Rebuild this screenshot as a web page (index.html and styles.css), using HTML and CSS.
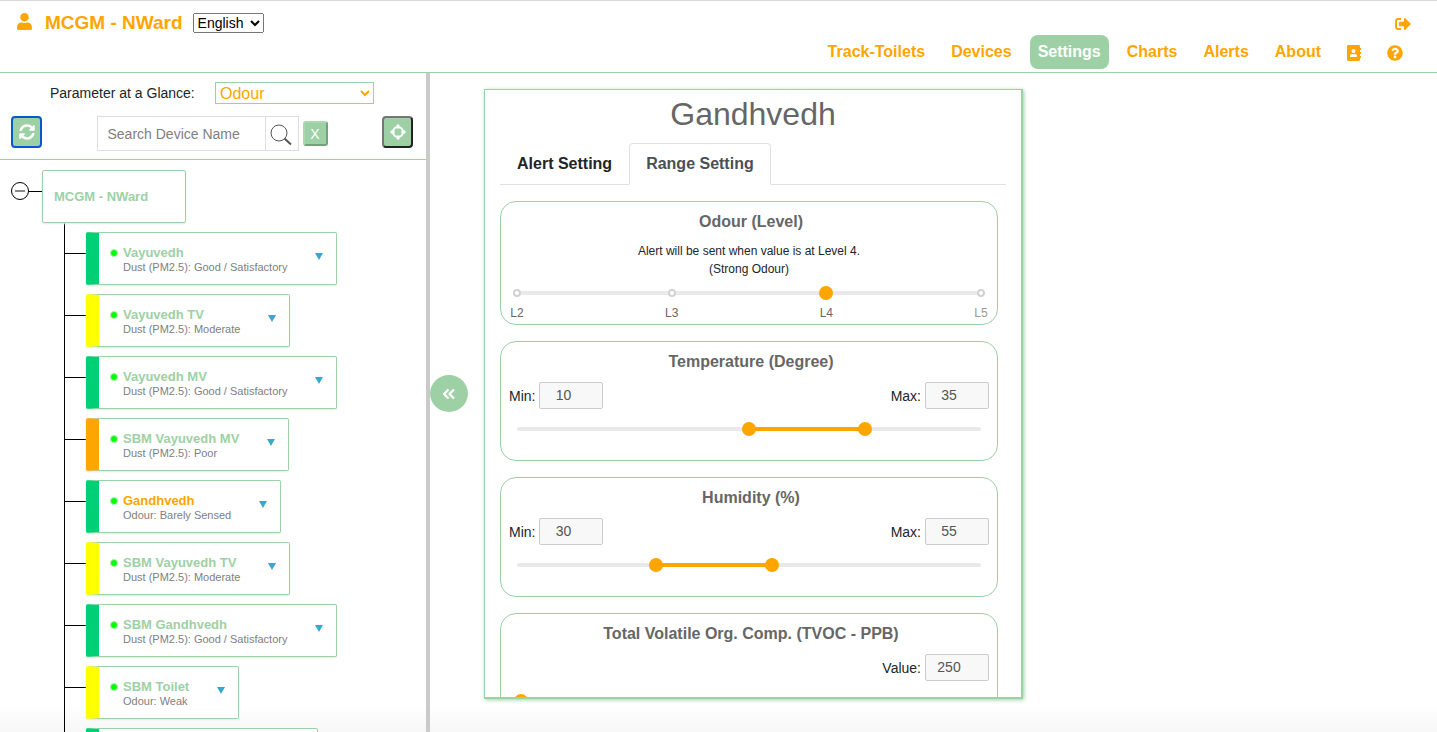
FILE: index.html
```html
<!DOCTYPE html>
<html lang="en">
<head>
<meta charset="utf-8">
<title>MCGM - NWard Settings</title>
<link rel="stylesheet" href="styles.css">
</head>
<body>
<header class="topbar">
  <div class="brand">
    <svg class="icon-user" viewBox="0 0 448 512" aria-hidden="true"><path d="M224 256c70.7 0 128-57.3 128-128S294.7 0 224 0 96 57.3 96 128s57.3 128 128 128zm89.6 32h-16.7c-22.2 10.2-46.9 16-72.9 16s-50.6-5.8-72.9-16h-16.7C60.2 288 0 348.2 0 422.4V464c0 26.5 21.5 48 48 48h352c26.5 0 48-21.5 48-48v-41.6c0-74.2-60.2-134.4-134.4-134.4z"/></svg>
    <h1 class="brand-name">MCGM - NWard</h1>
    <select class="language" aria-label="Language"><option>English</option></select>
  </div>
  <div class="menu">
    <a class="logout" href="#logout" aria-label="Log out"><svg viewBox="0 0 512 512"><path d="M497 273L329 441c-15 15-41 4.500-41-17v-96H152c-13.300 0-24-10.700-24-24v-96c0-13.300 10.700-24 24-24h136V88c0-21.400 25.900-32 41-17l168 168c9.300 9.400 9.300 24.600 0 34zM192 436v-40c0-6.600-5.400-12-12-12H96c-17.700 0-32-14.300-32-32V160c0-17.700 14.300-32 32-32h84c6.600 0 12-5.400 12-12V76c0-6.600-5.400-12-12-12H96c-53 0-96 43-96 96v192c0 53 43 96 96 96h84c6.600 0 12-5.400 12-12z"/></svg></a>
    <nav class="nav">
      <a href="#track">Track-Toilets</a>
      <a href="#devices">Devices</a>
      <a class="current" href="#settings" aria-current="page">Settings</a>
      <a href="#charts">Charts</a>
      <a href="#alerts">Alerts</a>
      <a href="#about">About</a>
      <a class="nav-icon" href="#contacts" aria-label="Contacts"><svg class="icon-book" viewBox="0 0 448 512"><path d="M436 160c6.600 0 12-5.400 12-12v-40c0-6.600-5.400-12-12-12h-20V48c0-26.500-21.500-48-48-48H48C21.500 0 0 21.500 0 48v416c0 26.500 21.500 48 48 48h320c26.500 0 48-21.500 48-48v-48h20c6.600 0 12-5.400 12-12v-40c0-6.600-5.400-12-12-12h-20v-64h20c6.600 0 12-5.400 12-12v-40c0-6.600-5.400-12-12-12h-20v-64h20zm-228-32c35.300 0 64 28.700 64 64s-28.700 64-64 64-64-28.700-64-64 28.700-64 64-64zm112 236.800c0 10.600-10 19.200-22.400 19.200H118.400C106 384 96 375.400 96 364.800v-19.200c0-31.800 30.100-57.600 67.200-57.600h5c12.300 5.100 25.700 8 39.800 8s27.600-2.900 39.800-8h5c37.100 0 67.200 25.800 67.200 57.600v19.200z"/></svg></a>
      <a class="nav-icon" href="#help" aria-label="Help"><svg class="icon-help" viewBox="0 0 512 512"><path d="M504 256c0 136.997-111.043 248-248 248S8 392.997 8 256C8 119.083 119.043 8 256 8s248 111.083 248 248zM262.655 90c-54.497 0-89.255 22.957-116.549 63.758-3.536 5.286-2.353 12.415 2.715 16.258l34.699 26.310c5.205 3.947 12.621 3.008 16.665-2.122 17.864-22.658 30.113-35.797 57.303-35.797 20.429 0 45.698 13.148 45.698 32.958 0 14.976-12.363 22.667-32.534 33.976C247.128 238.528 216 254.941 216 296v4c0 6.627 5.373 12 12 12h56c6.627 0 12-5.373 12-12v-1.333c0-28.462 83.186-29.647 83.186-106.667 0-58.002-60.165-102-116.531-102zM256 338c-25.365 0-46 20.635-46 46 0 25.364 20.635 46 46 46s46-20.636 46-46c0-25.365-20.635-46-46-46z"/></svg></a>
    </nav>
  </div>
</header>

<div class="workspace">
  <aside class="sidebar">
    <div class="filters">
      <div class="glance">
        <label for="parameter">Parameter at a Glance:</label>
        <select id="parameter" class="parameter"><option>Odour</option></select>
      </div>
      <div class="tools">
        <button class="tool refresh" type="button" aria-label="Refresh"><svg viewBox="0 0 512 512"><path d="M370.720 133.280C339.458 104.008 298.888 87.962 255.848 88c-77.458.068-144.328 53.178-162.791 126.850-1.344 5.363-6.122 9.150-11.651 9.150H24.103c-7.498 0-13.194-6.807-11.807-14.176C33.933 94.924 134.813 8 256 8c66.448 0 126.791 26.136 171.315 68.685L463.030 40.970C478.149 25.851 504 36.559 504 57.941V192c0 13.255-10.745 24-24 24H345.941c-21.382 0-32.090-25.851-16.971-40.971l41.750-41.749zM32 296h134.059c21.382 0 32.090 25.851 16.971 40.971l-41.750 41.750c31.262 29.273 71.835 45.319 114.876 45.280 77.418-.07 144.315-53.144 162.787-126.849 1.344-5.363 6.122-9.150 11.651-9.150h57.304c7.498 0 13.194 6.807 11.807 14.176C478.067 417.076 377.187 504 256 504c-66.448 0-126.791-26.136-171.315-68.685L48.970 471.030C33.851 486.149 8 475.441 8 454.059V320c0-13.255 10.745-24 24-24z"/></svg></button>
        <form class="search">
          <input class="search-text" type="text" placeholder="Search Device Name" aria-label="Search Device Name">
          <button class="search-go" type="button" aria-label="Search"><svg viewBox="0 0 24 24"><circle cx="10" cy="10" r="8"/><path d="M15.500 15.500L22 21.500" stroke-width="2"/></svg></button>
          <button class="search-clear" type="button">X</button>
        </form>
        <button class="tool locate" type="button" aria-label="Locate"><svg viewBox="0 0 16 16"><circle cx="8" cy="8" r="5" fill="none" stroke="#fff" stroke-width="2"/><path d="M6.500 1Q8-.4 9.500 1V4.600H6.500zM6.500 15Q8 16.400 9.500 15V11.400H6.500zM1 6.500Q-.4 8 1 9.500H4.600V6.500zM15 6.500Q16.400 8 15 9.500H11.400V6.500z"/></svg></button>
      </div>
    </div>

    <div class="tree">
      <div class="root">
        <button class="collapse" type="button" aria-label="Collapse MCGM - NWard"></button>
        <a class="root-name" href="#nward">MCGM - NWard</a>
      </div>
      <ul class="devices">
        <li><a class="device good" href="#d1"><span class="status"></span><span class="info"><b>Vayuvedh</b><small>Dust (PM2.5): Good / Satisfactory</small></span><span class="caret"></span></a></li>
        <li><a class="device moderate" href="#d2"><span class="status"></span><span class="info"><b>Vayuvedh TV</b><small>Dust (PM2.5): Moderate</small></span><span class="caret"></span></a></li>
        <li><a class="device good" href="#d3"><span class="status"></span><span class="info"><b>Vayuvedh MV</b><small>Dust (PM2.5): Good / Satisfactory</small></span><span class="caret"></span></a></li>
        <li><a class="device poor" href="#d4"><span class="status"></span><span class="info"><b>SBM Vayuvedh MV</b><small>Dust (PM2.5): Poor</small></span><span class="caret"></span></a></li>
        <li><a class="device good selected" href="#d5"><span class="status"></span><span class="info"><b>Gandhvedh</b><small>Odour: Barely Sensed</small></span><span class="caret"></span></a></li>
        <li><a class="device moderate" href="#d6"><span class="status"></span><span class="info"><b>SBM Vayuvedh TV</b><small>Dust (PM2.5): Moderate</small></span><span class="caret"></span></a></li>
        <li><a class="device good" href="#d7"><span class="status"></span><span class="info"><b>SBM Gandhvedh</b><small>Dust (PM2.5): Good / Satisfactory</small></span><span class="caret"></span></a></li>
        <li><a class="device moderate" href="#d8"><span class="status"></span><span class="info"><b>SBM Toilet</b><small>Odour: Weak</small></span><span class="caret"></span></a></li>
        <li><a class="device good unnamed" href="#d9" aria-label="Next device"></a></li>
      </ul>
    </div>
  </aside>

  <main class="content">
    <button class="hide-panel" type="button" aria-label="Hide device list"><svg viewBox="0 0 14 12"><path d="M6.500 1.500L2 6l4.500 4.500M12 1.500L7.500 6l4.500 4.500"/></svg></button>
    <section class="card">
      <h2 class="card-title">Gandhvedh</h2>
      <div class="tabs" role="tablist">
        <button class="tab" type="button" role="tab" aria-selected="false">Alert Setting</button>
        <button class="tab active" type="button" role="tab" aria-selected="true">Range Setting</button>
      </div>

      <section class="group">
        <h3>Odour (Level)</h3>
        <p class="note">Alert will be sent when value is at Level 4.<br>(Strong Odour)</p>
        <div class="slider">
          <div class="rail steps"><i></i><i></i><i></i><i></i></div>
          <input type="range" min="2" max="5" value="4" aria-label="Odour level">
        </div>
        <div class="marks"><span>L2</span><span>L3</span><span>L4</span><span class="off">L5</span></div>
      </section>

      <section class="group">
        <h3>Temperature (Degree)</h3>
        <div class="fields">
          <label>Min: <input type="number" value="10"></label>
          <label>Max: <input type="number" value="35"></label>
        </div>
        <div class="slider">
          <div class="rail"><div class="fill" style="margin-left:50%;width:25%"></div></div>
          <input type="range" min="-40" max="60" value="10" aria-label="Minimum temperature">
          <input type="range" min="-40" max="60" value="35" aria-label="Maximum temperature">
        </div>
      </section>

      <section class="group">
        <h3>Humidity (%)</h3>
        <div class="fields">
          <label>Min: <input type="number" value="30"></label>
          <label>Max: <input type="number" value="55"></label>
        </div>
        <div class="slider">
          <div class="rail"><div class="fill" style="margin-left:30%;width:25%"></div></div>
          <input type="range" min="0" max="100" value="30" aria-label="Minimum humidity">
          <input type="range" min="0" max="100" value="55" aria-label="Maximum humidity">
        </div>
      </section>

      <section class="group">
        <h3>Total Volatile Org. Comp. (TVOC - PPB)</h3>
        <div class="fields single">
          <label>Value: <input type="number" value="250"></label>
        </div>
        <div class="slider">
          <div class="rail"></div>
          <input type="range" min="0" max="30000" value="250" aria-label="TVOC value">
        </div>
      </section>
    </section>
  </main>
</div>
</body>
</html>
```

FILE: styles.css
```css
:root {
  --orange: #ffa500;
  --green: #9dd1a5;
  --gray: #666;
}

* { box-sizing: border-box; }

body {
  margin: 0;
  height: 100vh;
  display: flex;
  flex-direction: column;
  overflow: hidden;
  font-family: "Liberation Sans", Arial, sans-serif;
  font-size: 14px;
  color: #212529;
  background: linear-gradient(to top, #f7f7f7, #fff 28px);
}

button, input { font-family: inherit; margin: 0; }
a { text-decoration: none; }
svg { display: block; }

/* Header */
.topbar {
  flex: none;
  height: 73px;
  display: flex;
  justify-content: space-between;
  border-top: 1px solid #dadada;
  border-bottom: 1px solid var(--green);
  padding: 0 26px 0 17px;
}
.brand {
  display: flex;
  align-items: center;
  height: 44px;
}
.icon-user { width: 15px; height: 17px; margin: 0 13px 4px 0; fill: var(--orange); }
.brand-name { margin: 0 10px 0 0; font-size: 19px; color: var(--orange); }
.language { width: 71px; height: 20px; padding: 0; font: 14px "Liberation Sans", Arial, sans-serif; }

.menu {
  display: flex;
  flex-direction: column;
  align-items: flex-end;
  padding-top: 15px;
}
.logout svg { width: 16px; height: 16px; fill: var(--orange); }
.nav {
  display: flex;
  gap: 10px;
  margin-top: 3px;
}
.nav a {
  display: flex;
  align-items: center;
  height: 34px;
  padding: 0 8px;
  border-radius: 8px;
  font-size: 16px;
  font-weight: bold;
  color: var(--orange);
}
.nav a.current { background: var(--green); color: #fff; }
.nav-icon svg { fill: var(--orange); height: 16px; margin-top: 2px; }
.icon-book { width: 14px; }
.icon-help { width: 16px; }

/* Sidebar */
.workspace { flex: 1; display: flex; min-height: 0; }
.sidebar {
  flex: none;
  width: 430px;
  border-right: 4px solid #cacaca;
  overflow: hidden;
}
.filters { border-bottom: 1px solid var(--green); padding: 9px 13px 8px 11px; }
.glance { display: flex; align-items: center; gap: 16px; padding-left: 39px; }
.glance label { width: 149px; white-space: nowrap; }
.parameter {
  width: 159px;
  height: 22px;
  border: 1px solid var(--green);
  background: #fff;
  color: var(--orange);
  font: 16px "Liberation Sans", Arial, sans-serif;
  padding: 0;
}
.tools { display: flex; justify-content: space-between; margin-top: 12px; }
.tool {
  width: 31px;
  height: 32px;
  padding: 0;
  display: flex;
  align-items: center;
  justify-content: center;
  background: var(--green);
  border-radius: 4px;
}
.tool svg { width: 16px; height: 16px; fill: #fff; }
.refresh { border: 2px solid #0b57d0; }
.locate { border: 2px solid; border-color: #767676 #222 #222 #767676; }
.search { display: flex; align-items: center; }
.search-text {
  width: 168px;
  height: 35px;
  border: 1px solid #ddd;
  border-right: 0;
  padding: 0 10px;
  font-size: 14px;
}
.search-text::placeholder { color: #808080; }
.search-go {
  width: 34px;
  height: 35px;
  padding: 3px 2px 0 0;
  border: 1px solid #ddd;
  background: #fff;
  display: flex;
  align-items: center;
  justify-content: center;
}
.search-go svg { width: 24px; height: 24px; fill: none; stroke: #555; }
.search-clear {
  width: 25px;
  height: 25px;
  margin-left: 4px;
  padding: 0;
  border: 2px solid;
  border-color: #a9d8b0 #74a07b #74a07b #a9d8b0;
  border-radius: 3px;
  background: var(--green);
  color: #fff;
  font-size: 14px;
}

/* Device tree */
.tree { padding: 10px 0 0 11px; }
.root { display: flex; }
.collapse {
  position: relative;
  width: 18px;
  height: 18px;
  margin-top: 12px;
  padding: 0;
  border: 1px solid #000;
  border-radius: 50%;
  background: linear-gradient(#888, #888) center / 10px 2px no-repeat;
}
.collapse::after {
  content: "";
  position: absolute;
  left: 17px;
  top: 8px;
  width: 13px;
  height: 1px;
  background: #000;
}
.root-name {
  margin-left: 13px;
  width: 144px;
  height: 53px;
  padding-left: 11px;
  display: flex;
  align-items: center;
  border: 1px solid var(--green);
  border-radius: 2px;
  box-shadow: 0 1px 2px #dcefdf;
  color: var(--green);
  font-size: 13px;
  font-weight: bold;
}
.devices {
  list-style: none;
  margin: 0 0 0 53px;
  padding: 9px 0 0;
  border-left: 1px solid #000;
}
.devices li { display: flex; margin-bottom: 9px; }
.devices li::before {
  content: "";
  width: 21px;
  height: 1px;
  margin-top: 21px;
  background: #000;
}
.device {
  display: flex;
  align-items: center;
  height: 53px;
  padding: 0 13px 0 11px;
  border: 1px solid var(--green);
  border-left-width: 13px;
  border-radius: 2px;
  box-shadow: 0 1px 2px #dcefdf;
  background: #fff;
}
.good { border-left-color: #00d075; }
.moderate { border-left-color: #ff0; }
.poor { border-left-color: #ffa500; }
.unnamed { width: 232px; }
.status {
  width: 8px;
  height: 8px;
  margin: 0 5px 12px 0;
  border: 1px solid #b7e8b7;
  border-radius: 50%;
  background: #0f0;
}
.info { display: flex; flex-direction: column; padding-top: 1px; }
.info b { font-size: 13px; line-height: 16px; color: var(--green); }
.info small { font-size: 11px; line-height: 13px; color: #808080; }
.selected .info b { color: var(--orange); }
.caret {
  margin: 0 0 4px 28px;
  border: 4px solid transparent;
  border-top: 7px solid #35a9d1;
  border-bottom: 0;
}

/* Settings */
.content { flex: 1; display: flex; min-width: 0; }
.hide-panel {
  flex: none;
  align-self: center;
  width: 38px;
  height: 37px;
  margin: 0 16px 18px 0;
  padding: 0;
  display: flex;
  align-items: center;
  justify-content: center;
  border: 0;
  border-radius: 50%;
  background: var(--green);
}
.hide-panel svg { width: 14px; height: 12px; fill: none; stroke: #fff; stroke-width: 2.4; stroke-linejoin: round; }
.card {
  flex: 0 1 539px;
  margin: 16px 16px 33px 0;
  padding: 0 15px;
  border: 1px solid var(--green);
  border-right-width: 2px;
  border-bottom-width: 2px;
  box-shadow: 1px 1px 4px var(--green);
  background: #fff;
  overflow: hidden;
}
.card-title {
  margin: 5px 0 10px;
  font-size: 32px;
  font-weight: normal;
  line-height: 38px;
  text-align: center;
  color: var(--gray);
}
.tabs { display: flex; border-bottom: 1px solid #dee2e6; }
.tab {
  height: 42px;
  margin-bottom: -1px;
  padding: 0 16px;
  border: 1px solid transparent;
  border-radius: 4px 4px 0 0;
  background: none;
  color: #212529;
  font-size: 16px;
  font-weight: bold;
}
.tab.active { border-color: #dee2e6 #dee2e6 #fff; background: #fff; color: #495057; }

.group {
  margin: 16px 8px 0 0;
  padding: 8px 8px 24px;
  border: 1px solid var(--green);
  border-radius: 16px;
}
.group:has(.marks) { padding-bottom: 3px; }
.group h3 {
  margin: 0 0 8px;
  padding-left: 4px;
  font-size: 16px;
  line-height: 24px;
  text-align: center;
  color: var(--gray);
}
.note { margin: 0; font-size: 12px; line-height: 18px; text-align: center; }
.fields { display: flex; justify-content: space-between; }
.fields.single { justify-content: flex-end; }
.fields label { display: flex; align-items: center; gap: 4px; line-height: 16px; }
.fields input {
  width: 64px;
  height: 27px;
  padding: 0 16px 2px 0;
  border: 1px solid #ccc;
  border-radius: 2px;
  background: #f8f8f8;
  color: #555;
  font-size: 14px;
  text-align: center;
  appearance: textfield;
}
.fields input::-webkit-inner-spin-button { appearance: none; margin: 0; }

.slider { position: relative; height: 14px; margin: 13px 1px 0; }
.note + .slider { margin-top: 8px; }
.slider .rail {
  position: relative;
  top: 5px;
  height: 4px;
  margin: 0 7px;
  border-radius: 2px;
  background: #e9e9e9;
}
.fill { height: 4px; background: var(--orange); }
.steps { display: flex; justify-content: space-between; align-items: center; }
.steps i {
  width: 8px;
  height: 8px;
  margin: 0 -4px;
  border: 2px solid #d2d2d2;
  border-radius: 50%;
  background: #fff;
}
.slider input {
  position: absolute;
  left: 0;
  top: 0;
  width: 100%;
  height: 14px;
  appearance: none;
  background: none;
  pointer-events: none;
}
.slider input::-webkit-slider-thumb {
  appearance: none;
  width: 14px;
  height: 14px;
  border-radius: 50%;
  background: var(--orange);
  pointer-events: auto;
}
.marks {
  display: flex;
  justify-content: space-between;
  margin-top: 5px;
  font-size: 12px;
  line-height: 16px;
  color: var(--gray);
}
.marks span { width: 16px; text-align: center; }
.marks .off { color: #999; }
```
